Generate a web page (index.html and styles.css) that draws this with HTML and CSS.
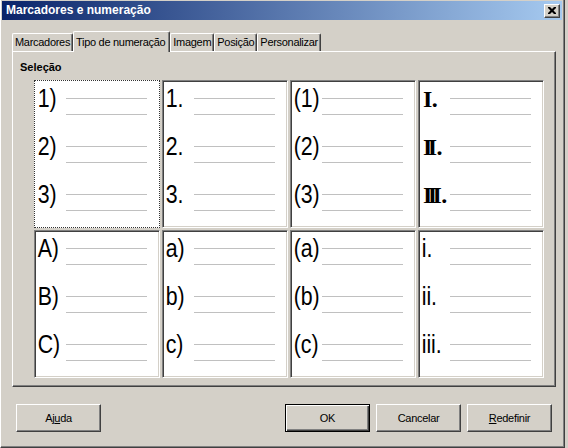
FILE: index.html
```html
<!DOCTYPE html>
<html lang="pt">
<head>
<meta charset="utf-8">
<title>Marcadores e numeração</title>
<link rel="stylesheet" href="styles.css">
</head>
<body>
<div class="window">
  <div class="titlebar">
    <span class="title">Marcadores e numeração</span>
    <span class="close"><svg width="8" height="7" viewBox="0 0 8 7"><path d="M0 0h2l2 2 2-2h2v1L5.5 3.5 8 6v1H6L4 5 2 7H0V6l2.5-2.5L0 1z" fill="#000"/></svg></span>
  </div>
  <div class="tabs">
    <div class="tab">Marcadores</div>
    <div class="tab sel">Tipo de numeração</div>
    <div class="tab">Imagem</div>
    <div class="tab">Posição</div>
    <div class="tab">Personalizar</div>
  </div>
  <div class="panel">
    <div class="label">Seleção</div>
    <div class="grid">
      <div class="cell focus">
        <div class="item"><span class="num">1)</span><span class="lines"><i></i><i></i></span></div>
        <div class="item"><span class="num">2)</span><span class="lines"><i></i><i></i></span></div>
        <div class="item"><span class="num">3)</span><span class="lines"><i></i><i></i></span></div>
      </div>
      <div class="cell">
        <div class="item"><span class="num">1.</span><span class="lines"><i></i><i></i></span></div>
        <div class="item"><span class="num">2.</span><span class="lines"><i></i><i></i></span></div>
        <div class="item"><span class="num">3.</span><span class="lines"><i></i><i></i></span></div>
      </div>
      <div class="cell">
        <div class="item"><span class="num">(1)</span><span class="lines"><i></i><i></i></span></div>
        <div class="item"><span class="num">(2)</span><span class="lines"><i></i><i></i></span></div>
        <div class="item"><span class="num">(3)</span><span class="lines"><i></i><i></i></span></div>
      </div>
      <div class="cell">
        <div class="item"><span class="num roman"><span class="rn">I</span>.</span><span class="lines"><i></i><i></i></span></div>
        <div class="item"><span class="num roman"><span class="rn">II</span>.</span><span class="lines"><i></i><i></i></span></div>
        <div class="item"><span class="num roman"><span class="rn">III</span>.</span><span class="lines"><i></i><i></i></span></div>
      </div>
      <div class="cell">
        <div class="item"><span class="num">A)</span><span class="lines"><i></i><i></i></span></div>
        <div class="item"><span class="num">B)</span><span class="lines"><i></i><i></i></span></div>
        <div class="item"><span class="num">C)</span><span class="lines"><i></i><i></i></span></div>
      </div>
      <div class="cell">
        <div class="item"><span class="num">a)</span><span class="lines"><i></i><i></i></span></div>
        <div class="item"><span class="num">b)</span><span class="lines"><i></i><i></i></span></div>
        <div class="item"><span class="num">c)</span><span class="lines"><i></i><i></i></span></div>
      </div>
      <div class="cell">
        <div class="item"><span class="num">(a)</span><span class="lines"><i></i><i></i></span></div>
        <div class="item"><span class="num">(b)</span><span class="lines"><i></i><i></i></span></div>
        <div class="item"><span class="num">(c)</span><span class="lines"><i></i><i></i></span></div>
      </div>
      <div class="cell">
        <div class="item"><span class="num">i.</span><span class="lines"><i></i><i></i></span></div>
        <div class="item"><span class="num">ii.</span><span class="lines"><i></i><i></i></span></div>
        <div class="item"><span class="num">iii.</span><span class="lines"><i></i><i></i></span></div>
      </div>
    </div>
  </div>
  <div class="buttons">
    <button class="btn">Aj<u>u</u>da</button>
    <span class="spacer"></span>
    <button class="btn default">OK</button>
    <button class="btn">Cancelar</button>
    <button class="btn"><u>R</u>edefinir</button>
  </div>
</div>
</body>
</html>
```
FILE: styles.css
```css
* { box-sizing: border-box; }
html, body { margin: 0; padding: 0; }
body {
  background: #d4d0c8;
  font-family: "Liberation Sans", Arial, sans-serif;
  font-size: 11px;
  color: #000;
  width: 568px;
  height: 448px;
  overflow: hidden;
}
.window {
  width: 565px;
  height: 448px;
  background: #d4d0c8;
  border-left: 1px solid #fff;
  border-right: 1px solid #404040;
  border-bottom: 1px solid #404040;
  box-shadow: inset -1px -1px 0 #808080;
  display: flex;
  flex-direction: column;
}
.titlebar {
  margin: 1px 2px 0 1px;
  height: 19px;
  background: linear-gradient(to right, #0a246a, #a6caf0);
  display: flex;
  align-items: center;
  padding-left: 4px;
  padding-right: 2px;
}
.title {
  flex: 1;
  color: #fff;
  font-weight: bold;
  font-size: 12px;
  line-height: 19px;
}
.close {
  width: 16px;
  height: 14px;
  background: #d4d0c8;
  border-top: 1px solid #fff;
  border-left: 1px solid #fff;
  border-right: 1px solid #404040;
  border-bottom: 1px solid #404040;
  box-shadow: inset -1px -1px 0 #808080;
  display: flex;
  align-items: center;
  justify-content: center;
  padding-bottom: 1px;
}
.tabs {
  margin-top: 11px;
  height: 20px;
  display: flex;
  align-items: flex-end;
  padding-left: 11px;
}
.tab {
  height: 18px;
  padding: 2px 2px 0 2px;
  line-height: 13px;
  letter-spacing: -0.3px;
  white-space: nowrap;
  border-top: 1px solid #fff;
  border-left: 1px solid #fff;
  border-right: 1px solid #404040;
  box-shadow: inset -1px 0 0 #808080;
  border-radius: 2px 2px 0 0;
}
.tab.sel {
  height: 21px;
  margin-bottom: -1px;
  padding: 4px 4px 0 2px;
  background: #d4d0c8;
  position: relative;
  z-index: 1;
}
.panel {
  margin-left: 11px;
  width: 544px;
  height: 336px;
  border-top: 1px solid #fff;
  border-left: 1px solid #fff;
  border-right: 1px solid #404040;
  border-bottom: 1px solid #404040;
  box-shadow: inset -1px -1px 0 #808080;
  padding: 9px 0 0 7px;
}
.label {
  font-weight: bold;
  line-height: 13px;
}
.grid {
  margin: 6px 0 0 14px;
  display: grid;
  grid-template-columns: repeat(4, 126px);
  grid-template-rows: repeat(2, 148px);
  gap: 2px;
}
.cell {
  background: #fff;
  border: 1px solid;
  border-color: #808080 #fff #fff #808080;
  box-shadow: inset 1px 1px 0 #404040, inset -1px -1px 0 #d4d0c8;
  padding: 3px 0 0 1px;
}
.cell.focus {
  border: 1px dotted #333;
  box-shadow: none;
}
.item {
  display: flex;
  height: 48px;
}
.num {
  width: 30px;
  padding-left: 2px;
  margin-top: 1px;
  font-family: "Liberation Sans", Arial, sans-serif;
  font-size: 26px;
  line-height: 26px;
  white-space: nowrap;
  transform: scaleX(0.82);
  transform-origin: 0 0;
}
.num.roman {
  font-family: "Liberation Serif", serif;
  font-weight: bold;
  font-size: 24px;
  margin-top: 2px;
  padding-left: 3px;
  transform: none;
}
.rn {
  letter-spacing: -4.6px;
  margin-right: 4px;
}
.lines {
  width: 81px;
  padding-top: 14px;
}
.lines i {
  display: block;
  height: 1px;
  background: #c0c0c0;
}
.lines i + i {
  margin-top: 15px;
}
.buttons {
  margin-top: 17px;
  display: flex;
  gap: 6px;
  padding: 0 12px 0 15px;
}
.spacer { flex: 1; }
.btn {
  width: 85px;
  height: 28px;
  font-family: "Liberation Sans", Arial, sans-serif;
  font-size: 11px;
  letter-spacing: -0.3px;
  color: #000;
  background: #d4d0c8;
  border-top: 1px solid #fff;
  border-left: 1px solid #fff;
  border-right: 1px solid #404040;
  border-bottom: 1px solid #404040;
  box-shadow: inset -1px -1px 0 #808080;
  padding: 0;
  margin: 0;
}
.btn.default {
  border: 1px solid #000;
  box-shadow: inset 1px 1px 0 #fff, inset -1px -1px 0 #404040, inset -2px -2px 0 #808080;
}
```
